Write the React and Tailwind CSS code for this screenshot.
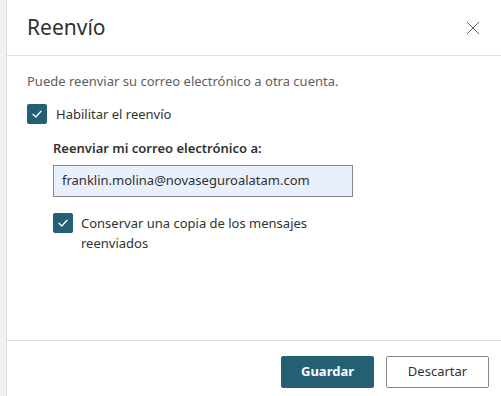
import React from "react";

function Check() {
  return (
    <svg width="12" height="12" viewBox="0 0 12 12" fill="none">
      <path d="M2 6.3 L4.8 9 L10 3.2" stroke="white" strokeWidth="1.3" strokeLinecap="round" strokeLinejoin="round" />
    </svg>
  );
}

export default function App() {
  return (
    <div className="flex h-[396px] w-[501px] overflow-hidden bg-white text-[#323130]" style={{ fontFamily: '"Noto Sans", "Open Sans", sans-serif' }}>
      <div className="w-[7px] shrink-0 border-r border-[#e1dfdd] bg-[#f3f2f1]" />
      <div className="flex flex-1 flex-col">
        <div className="flex h-[56px] items-center justify-between border-b border-[#e1dfdd] pl-[20px] pr-[20px]">
          <h1 className="text-[21px] font-normal leading-none text-[#323130]">Reenvío</h1>
          <svg width="14" height="14" viewBox="0 0 14 14" className="mr-[1px]">
            <path d="M1 1 L13 13 M13 1 L1 13" stroke="#605e5c" strokeWidth="1" />
          </svg>
        </div>
        <div className="flex flex-1 flex-col pl-[20px] pt-[16px]">
          <p className="text-[13px] leading-[18px] text-[#605e5c]">Puede reenviar su correo electrónico a otra cuenta.</p>
          <div className="mt-[14px] flex items-center gap-[9px]">
            <span className="flex h-[20px] w-[20px] items-center justify-center rounded-[2px] bg-[#255f73]"><Check /></span>
            <span className="text-[13px] leading-[20px]">Habilitar el reenvío</span>
          </div>
          <div className="ml-[26px] mt-[14px] flex flex-col">
            <label className="text-[13px] font-semibold leading-[20px]">Reenviar mi correo electrónico a:</label>
            <div className="mt-[7px] flex h-[32px] w-[300px] items-center border border-[#8a8886] bg-[#e8f0fe] px-[8px] text-[13px]">
              franklin.molina@novaseguroalatam.com
            </div>
            <div className="mt-[16px] flex items-start gap-[8px]">
              <span className="flex h-[20px] w-[20px] shrink-0 items-center justify-center rounded-[2px] bg-[#255f73]"><Check /></span>
              <span className="w-[260px] text-[13px] leading-[20px]">Conservar una copia de los mensajes reenviados</span>
            </div>
          </div>
        </div>
        <div className="flex h-[56px] items-start justify-end gap-[12px] border-t border-[#e1dfdd] pr-[12px] pt-[15px]">
          <button className="h-[32px] w-[93px] rounded-[2px] bg-[#255f73] text-[13px] font-bold text-white">Guardar</button>
          <button className="h-[32px] w-[103px] rounded-[2px] border border-[#8a8886] bg-white text-[13px] text-[#323130]">Descartar</button>
        </div>
      </div>
    </div>
  );
}
